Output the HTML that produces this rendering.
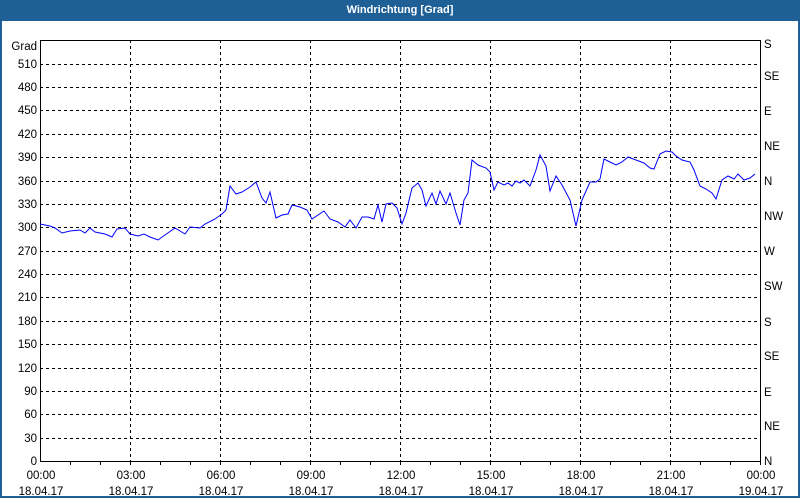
<!DOCTYPE html>
<html><head><meta charset="utf-8"><style>
html,body{margin:0;padding:0;background:#fff;}
body{width:800px;height:500px;overflow:hidden;position:relative;font-family:"Liberation Sans",sans-serif;}
.frame{position:absolute;left:0;top:0;width:796px;height:496px;border:2px solid #1e6096;border-top:none;}
.title{position:absolute;left:0;top:0;width:800px;height:21px;background:#1e6096;color:#fff;font-weight:bold;font-size:11px;text-align:center;line-height:21px;}
</style></head><body>
<div class="frame"></div>
<div class="title">Windrichtung [Grad]</div>
<svg width="800" height="500" style="position:absolute;left:0;top:0" font-family="Liberation Sans, sans-serif" font-size="11.5">
<g stroke="#000" stroke-width="1" stroke-dasharray="3,3" shape-rendering="crispEdges">
<line x1="40" x2="760" y1="64.5" y2="64.5"/><line x1="40" x2="760" y1="87.5" y2="87.5"/><line x1="40" x2="760" y1="110.5" y2="110.5"/><line x1="40" x2="760" y1="134.5" y2="134.5"/><line x1="40" x2="760" y1="157.5" y2="157.5"/><line x1="40" x2="760" y1="181.5" y2="181.5"/><line x1="40" x2="760" y1="204.5" y2="204.5"/><line x1="40" x2="760" y1="227.5" y2="227.5"/><line x1="40" x2="760" y1="251.5" y2="251.5"/><line x1="40" x2="760" y1="274.5" y2="274.5"/><line x1="40" x2="760" y1="297.5" y2="297.5"/><line x1="40" x2="760" y1="321.5" y2="321.5"/><line x1="40" x2="760" y1="344.5" y2="344.5"/><line x1="40" x2="760" y1="368.5" y2="368.5"/><line x1="40" x2="760" y1="391.5" y2="391.5"/><line x1="40" x2="760" y1="414.5" y2="414.5"/><line x1="40" x2="760" y1="438.5" y2="438.5"/>
<line y1="40" y2="461" x1="130.5" x2="130.5"/><line y1="40" y2="461" x1="220.5" x2="220.5"/><line y1="40" y2="461" x1="310.5" x2="310.5"/><line y1="40" y2="461" x1="400.5" x2="400.5"/><line y1="40" y2="461" x1="490.5" x2="490.5"/><line y1="40" y2="461" x1="580.5" x2="580.5"/><line y1="40" y2="461" x1="670.5" x2="670.5"/>
</g>
<rect x="40.5" y="40.5" width="720" height="421" fill="none" stroke="#000" shape-rendering="crispEdges"/>
<g stroke="#000" shape-rendering="crispEdges">
<path d="M70.5 461v4M100.5 461v4M130.5 461v4M160.5 461v4M190.5 461v4M220.5 461v4M250.5 461v4M280.5 461v4M310.5 461v4M340.5 461v4M370.5 461v4M400.5 461v4M430.5 461v4M460.5 461v4M490.5 461v4M520.5 461v4M550.5 461v4M580.5 461v4M610.5 461v4M640.5 461v4M670.5 461v4M700.5 461v4M730.5 461v4M760.5 461v4"/>
</g>
<polyline fill="none" stroke="#0000ff" stroke-width="1" points="40,224 50,226 55,228 62,233 70,231 80,230 85,233 90,228 95,232 105,234 112,237 117,229 125,228 130,234 138,236 144,234 150,237 158,240 165,235 175,228 185,234 190,227 200,228 205,224 215,219 222,214 226,210 230,186 236,194 242,192 250,187 256,182 262,198 266,203 270,192 276,218 282,215 288,214 292,205 300,207 307,210 312,219 318,215 324,211 330,219 338,222 345,227 350,220 356,228 362,217 368,217 374,219 378,205 382,222 386,204 392,203 397,208 402,224 406,213 412,188 418,183 422,190 426,206 432,193 436,204 440,191 446,204 450,193 456,213 460,225 464,200 468,193 472,160 478,165 486,168 490,172 494,190 498,182 504,185 508,183 512,186 516,181 520,183 524,180 530,186 536,170 540,155 546,166 550,191 556,176 562,185 570,200 576,226 582,200 590,182 596,182 600,179 604,159 610,162 616,165 622,162 628,157 636,160 644,163 650,168 654,169 660,154 666,151 672,152 676,156 682,160 690,162 694,170 700,186 706,189 712,193 716,199 722,180 728,176 734,179 738,174 744,180 750,178 755,174"/>
<g text-anchor="end" fill="#000">
<text x="37" y="50">Grad</text>
<text x="37" y="68">510</text><text x="37" y="91">480</text><text x="37" y="114">450</text><text x="37" y="138">420</text><text x="37" y="161">390</text><text x="37" y="185">360</text><text x="37" y="208">330</text><text x="37" y="231">300</text><text x="37" y="255">270</text><text x="37" y="278">240</text><text x="37" y="301">210</text><text x="37" y="325">180</text><text x="37" y="348">150</text><text x="37" y="372">120</text><text x="37" y="395">90</text><text x="37" y="418">60</text><text x="37" y="442">30</text><text x="37" y="465">0</text>
</g>
<g fill="#000">
<text x="764" y="48">S</text><text x="764" y="80">SE</text><text x="764" y="115">E</text><text x="764" y="150">NE</text><text x="764" y="185">N</text><text x="764" y="220">NW</text><text x="764" y="255">W</text><text x="764" y="290">SW</text><text x="764" y="326">S</text><text x="764" y="360">SE</text><text x="764" y="396">E</text><text x="764" y="430">NE</text><text x="764" y="465">N</text>
</g>
<g text-anchor="middle" fill="#000">
<text x="41" y="479">00:00</text><text x="41" y="495">18.04.17</text>
<text x="131" y="479">03:00</text><text x="131" y="495">18.04.17</text>
<text x="221" y="479">06:00</text><text x="221" y="495">18.04.17</text>
<text x="311" y="479">09:00</text><text x="311" y="495">18.04.17</text>
<text x="401" y="479">12:00</text><text x="401" y="495">18.04.17</text>
<text x="491" y="479">15:00</text><text x="491" y="495">18.04.17</text>
<text x="581" y="479">18:00</text><text x="581" y="495">18.04.17</text>
<text x="671" y="479">21:00</text><text x="671" y="495">18.04.17</text>
<text x="761" y="479">00:00</text><text x="761" y="495">19.04.17</text>
</g>
</svg>
</body></html>
